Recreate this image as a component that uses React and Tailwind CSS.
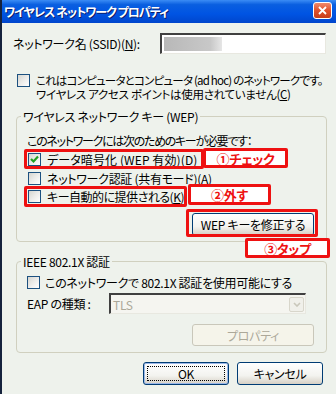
import React from "react";

function CheckBox({ checked }) {
  return (
    <div className="w-[13px] h-[13px] shrink-0 border border-[#1c5180] bg-[linear-gradient(135deg,#d5d5cf_0%,#ececea_50%,#ffffff_100%)] flex items-center justify-center">
      {checked && (
        <svg width="9" height="9" viewBox="0 0 9 9">
          <path d="M1 4 L3.5 6.5 L8 1.5" stroke="#21a121" strokeWidth="2.2" fill="none" />
        </svg>
      )}
    </div>
  );
}

function Btn({ children, className = "", disabled = false, def = false }) {
  if (disabled) {
    return (
      <div className={"flex items-center justify-center rounded-[3px] border border-[#c9c7ba] bg-[#f5f4ea] text-[#aca899] " + className}>
        {children}
      </div>
    );
  }
  return (
    <div className={"flex items-center justify-center rounded-[3px] border border-[#003c74] bg-[linear-gradient(180deg,#ffffff_0%,#f3f3ef_60%,#d6d0c5_100%)] " + (def ? "shadow-[inset_0_0_0_1px_#9bb7e8] " : "") + className}>
      {children}
    </div>
  );
}

function Tag({ children, className }) {
  return (
    <div className={"absolute flex items-center justify-center bg-white border-[3px] border-[#ee1111] rounded-[2px] text-[#ee1111] font-bold text-[13px] leading-none " + className}>
      {children}
    </div>
  );
}

export default function App() {
  return (
    <div className="relative w-[336px] h-[394px] overflow-hidden bg-[#eef2ec] border-l-2 border-[#15223c] font-['Noto_Sans_CJK_JP','Noto_Sans',sans-serif] text-[12px] text-black leading-[13px] tracking-[-0.3px] [font-feature-settings:'palt']">
      {/* title bar */}
      <div className="h-[23px] flex items-center justify-between bg-[linear-gradient(180deg,#3b8cf5_0%,#0a5fe0_20%,#0054e3_60%,#0046cc_100%)] pl-[2px] pr-[4px]">
        <span className="text-white font-bold text-[12px] tracking-[-1px] [text-shadow:1px_1px_0_#0a1e6e]">ワイヤレス ネットワーク プロパティ</span>
        <div className="w-[19px] h-[17px] mt-[-2px] rounded-[3px] border border-white bg-[linear-gradient(180deg,#f08a6c_0%,#e0512c_50%,#c63e1a_100%)] flex items-center justify-center">
          <svg width="9" height="9" viewBox="0 0 9 9">
            <path d="M1 1 L8 8 M8 1 L1 8" stroke="white" strokeWidth="1.8" />
          </svg>
        </div>
      </div>

      {/* SSID row */}
      <div className="mt-[10px] h-[21px] flex items-center">
        <span className="ml-[11px] w-[147px]">ネットワーク名 (SSID)(<span className="underline">N</span>):</span>
        <div className="w-[166px] h-[21px] border-t-2 border-l-2 border-[#404040] border-r border-b border-r-[#e8e8e0] border-b-[#e8e8e0] bg-white pl-[2px] pt-[2px]">
          <div className="w-[58px] h-[14px] bg-[linear-gradient(90deg,#b8b8b8_0%,#c8c8c8_80%,#e6e6e6_100%)]" />
        </div>
      </div>

      {/* ad hoc row */}
      <div className="mt-[20px] flex items-start">
        <div className="ml-[15px]"><CheckBox /></div>
        <div className="ml-[6px] mt-[-1px] text-[11.5px] leading-[14px] whitespace-nowrap">
          <div className="tracking-[-0.8px]">これはコンピュータとコンピュータ (ad hoc) のネットワークです。</div>
          <div className="tracking-[-0.3px]">ワイヤレス アクセス ポイントは使用されていません(<span className="underline">C</span>)</div>
        </div>
      </div>

      {/* group WEP */}
      <fieldset className="mt-[9px] ml-[14px] w-[311px] border border-[#d0d0bf] rounded-[4px] pl-[10px] pb-[5px]">
        <legend className="ml-[-6px] px-[2px] leading-[13px]">ワイヤレス ネットワーク キー (WEP)</legend>
        <div className="mt-[10px] h-[14px] flex items-center tracking-[-1.3px]">このネットワークには次のためのキーが必要です：</div>
        <div className="mt-[6px] h-[13px] flex items-center gap-[6px] pl-[1px]">
          <CheckBox checked />
          <span className="tracking-[0.1px]">データ暗号化 (WEP 有効)(<span className="underline">D</span>)</span>
        </div>
        <div className="mt-[6px] h-[13px] flex items-center gap-[6px] pl-[1px]">
          <CheckBox />
          <span>ネットワーク認証 (共有モード)(A)</span>
        </div>
        <div className="mt-[5px] h-[13px] flex items-center gap-[6px] pl-[1px]">
          <CheckBox />
          <span className="tracking-[-0.5px]">キー自動的に提供される(<span className="underline">K</span>)</span>
        </div>
        <div className="mt-[10px] flex justify-end pr-[12px]">
          <Btn className="w-[122px] h-[23px]">WEP キーを修正する</Btn>
        </div>
      </fieldset>

      {/* group 802.1X */}
      <fieldset className="mt-[13px] ml-[14px] w-[311px] border border-[#d0d0bf] rounded-[4px] pl-[10px] pb-[6px]">
        <legend className="ml-[-6px] px-[2px] leading-[13px]">IEEE 802.1X 認証</legend>
        <div className="mt-[8px] h-[13px] flex items-center gap-[5px]">
          <CheckBox />
          <span>このネットワークで 802.1X 認証を使用可能にする</span>
        </div>
        <div className="mt-[4px] h-[21px] flex items-center">
          <span className="w-[82px]">EAP の種類 :</span>
          <div className="w-[197px] h-[21px] border-t-2 border-l-2 border-[#404040] border-r border-b border-r-[#e8e8e0] border-b-[#e8e8e0] bg-[#f5f5f0] flex items-center justify-between pl-[2px] pr-[1px] text-[#aca899]">
            <span>TLS</span>
            <div className="w-[15px] h-[15px] rounded-[2px] border border-[#d8d6cb] bg-[#f0f0ea] flex items-center justify-center">
              <svg width="8" height="5" viewBox="0 0 8 5">
                <path d="M1 1 L4 4 L7 1" stroke="#c9c7ba" strokeWidth="1.6" fill="none" />
              </svg>
            </div>
          </div>
        </div>
        <div className="mt-[10px] flex justify-end pr-[12px]">
          <Btn disabled className="w-[122px] h-[22px]">プロパティ</Btn>
        </div>
      </fieldset>

      {/* bottom buttons */}
      <div className="mt-[9px] flex justify-end gap-[8px] pr-[13px]">
        <Btn def className="w-[86px] h-[23px] p-[3px]">
          <div className="w-full h-full border border-dotted border-black flex items-center justify-center">OK</div>
        </Btn>
        <Btn className="w-[86px] h-[23px]">キャンセル</Btn>
      </div>

      {/* annotations */}
      <div className="absolute left-[22px] top-[149px] w-[180px] h-[20px] border-[3px] border-[#ee1111] rounded-[2px]" />
      <Tag className="left-[201px] top-[148px] w-[85px] h-[20px]">①チェック</Tag>
      <div className="absolute left-[22px] top-[186px] w-[163px] h-[21px] border-[3px] border-[#ee1111] rounded-[2px]" />
      <Tag className="left-[186px] top-[184px] w-[83px] h-[21px]">②外す</Tag>
      <div className="absolute left-[184px] top-[209px] w-[132px] h-[28px] border-[3px] border-[#ee1111] rounded-[2px]" />
      <Tag className="left-[243px] top-[238px] w-[85px] h-[20px]">③タップ</Tag>
    </div>
  );
}
